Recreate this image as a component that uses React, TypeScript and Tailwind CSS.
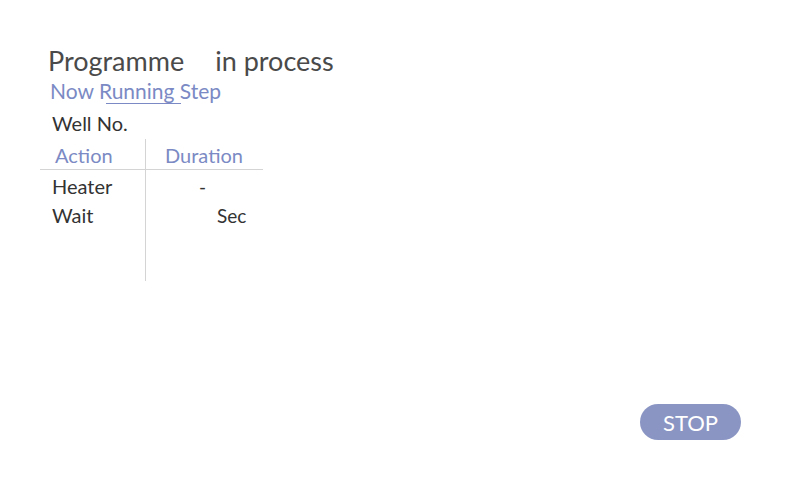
export default function App() {
  return (
    <div className="flex h-[480px] w-[800px] flex-col bg-white font-['Lato','Noto_Sans',sans-serif]">
      <div className="flex-1 pl-12 pt-[44px]">
        <h1 className="text-[27px] leading-[34px] text-[#4a4a4a]">
          Programme
          <span className="inline-block w-[31px]" />
          in process
        </h1>
        <p className="pl-[2px] text-[21px] leading-[26px] text-[#7b8ac4]">
          Now{" "}
          <span className="relative">
            Running Step
            <span className="absolute bottom-[-1px] left-[7px] h-px w-[75px] bg-[#7b8ac4]" />
          </span>
        </p>
        <p className="mt-[6px] pl-[4px] text-[20px] leading-[26px] text-[#333333]">Well No.</p>

        <div className="ml-[-8px] mt-[3px] grid w-[223px] grid-cols-[106px_117px]">
          <div className="border-b border-r border-[#d4d4d4] pb-[2px] pl-[15px] pt-[5px] text-[20px] leading-[23px] text-[#7b8ac4]">
            Action
          </div>
          <div className="border-b border-[#d4d4d4] pb-[2px] pl-[19px] pt-[5px] text-[20px] leading-[23px] text-[#7b8ac4]">
            Duration
          </div>
          <div className="h-[111px] border-r border-[#d4d4d4] pl-[12px] pt-[2px] text-[20px] leading-[29px] text-[#333333]">
            <div>Heater</div>
            <div>Wait</div>
          </div>
          <div className="pt-[2px] text-[19px] leading-[29px] text-[#333333]">
            <div className="pl-[53px]">-</div>
            <div className="pl-[71px]">Sec</div>
          </div>
        </div>
      </div>
      <div className="flex justify-end pb-[40px] pr-[59px]">
        <button
          type="button"
          className="h-[36px] w-[101px] rounded-full bg-[#8a95c3] text-[22px] text-white"
        >
          STOP
        </button>
      </div>
    </div>
  );
}
